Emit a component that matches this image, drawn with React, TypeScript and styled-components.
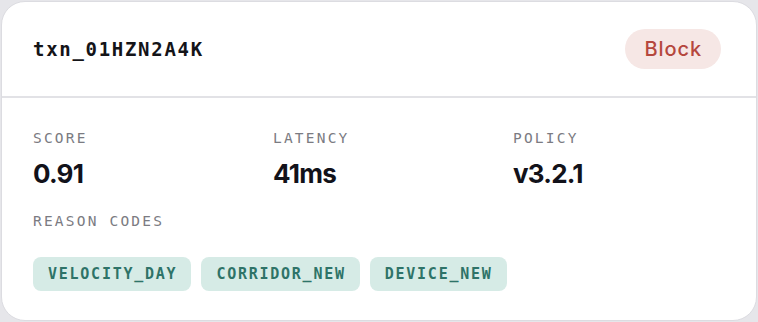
import React from "react";
import styled, { createGlobalStyle } from "styled-components";

const Global = createGlobalStyle`
  html, body { margin: 0; padding: 0; background: #e6e6ea; }
  body { font-family: Inter, "Noto Sans", sans-serif; }
  * { box-sizing: border-box; }
`;

const Card = styled.div`
  margin: 1px;
  width: 756px;
  height: 320px;
  background: #ffffff;
  border: 1px solid #dcdce1;
  border-radius: 24px;
  overflow: hidden;
  display: flex;
  flex-direction: column;
`;

const Header = styled.div`
  height: 96px;
  padding: 0 35px 0 31px;
  display: flex;
  align-items: center;
  justify-content: space-between;
  border-bottom: 2px solid #e2e2e6;
`;

const TxnId = styled.div`
  font-family: "DejaVu Sans Mono", "Liberation Mono", monospace;
  font-size: 19px;
  font-weight: 700;
  letter-spacing: 1.7px;
  color: #141418;
`;

const Pill = styled.div`
  height: 40px;
  padding: 0 19px 0 20px;
  border-radius: 20px;
  background: #f6e7e5;
  color: #b5473d;
  font-size: 20px;
  font-weight: 500;
  letter-spacing: 0.9px;
  display: flex;
  align-items: center;
`;

const Body = styled.div`
  padding: 32px 32px 0 31px;
  display: flex;
  flex-direction: column;
`;

const Stats = styled.div`
  display: grid;
  grid-template-columns: repeat(3, 212px);
  column-gap: 28px;
`;

const Stat = styled.div`
  display: flex;
  flex-direction: column;
  gap: 11px;
`;

const Label = styled.div`
  font-family: "DejaVu Sans Mono", "Liberation Mono", monospace;
  font-size: 14.5px;
  line-height: 17px;
  letter-spacing: 2.2px;
  color: #7b7b82;
`;

const Value = styled.div`
  font-size: 26px;
  line-height: 31px;
  font-weight: 700;
  letter-spacing: -0.03em;
  color: #12121a;
`;

const Reasons = styled.div`
  margin-top: 24px;
  display: flex;
  flex-direction: column;
  gap: 27px;
`;

const Chips = styled.div`
  display: flex;
  gap: 10px;
`;

const Chip = styled.div`
  height: 34px;
  padding: 0 14px 0 15px;
  border-radius: 8px;
  background: #d6ebe6;
  color: #2e7368;
  font-family: "DejaVu Sans Mono", "Liberation Mono", monospace;
  font-size: 15px;
  font-weight: 700;
  letter-spacing: 1.75px;
  display: flex;
  align-items: center;
`;

const stats = [
  { label: "SCORE", value: "0.91" },
  { label: "LATENCY", value: "41ms" },
  { label: "POLICY", value: "v3.2.1" },
];

const codes = ["VELOCITY_DAY", "CORRIDOR_NEW", "DEVICE_NEW"];

export default function App() {
  return (
    <>
      <Global />
      <Card>
        <Header>
          <TxnId>txn_01HZN2A4K</TxnId>
          <Pill>Block</Pill>
        </Header>
        <Body>
          <Stats>
            {stats.map((s) => (
              <Stat key={s.label}>
                <Label>{s.label}</Label>
                <Value>{s.value}</Value>
              </Stat>
            ))}
          </Stats>
          <Reasons>
            <Label>REASON CODES</Label>
            <Chips>
              {codes.map((c) => (
                <Chip key={c}>{c}</Chip>
              ))}
            </Chips>
          </Reasons>
        </Body>
      </Card>
    </>
  );
}
